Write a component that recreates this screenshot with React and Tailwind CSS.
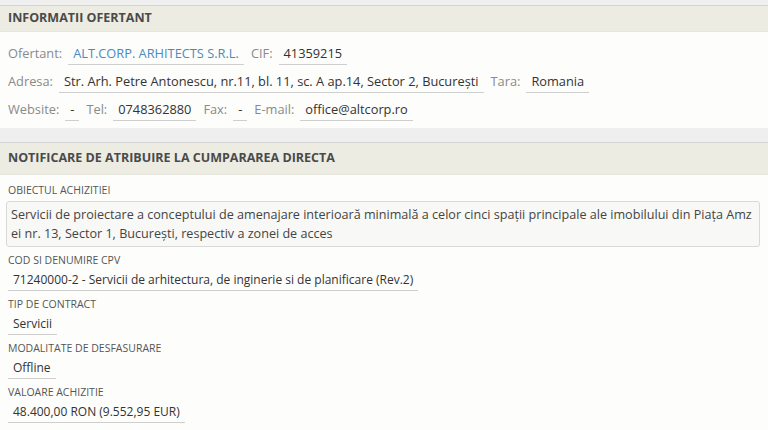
import React from "react";

function Field({ label, children, link }) {
  return (
    <span className="mr-[7px]">
      <span className="text-[#8a8a8a] mr-[6px]">{label}</span>
      <span
        className={
          "px-[5px] pb-[2px] border-b border-[#cfcfcf] " +
          (link ? "text-[#4b8bc0]" : "text-[#333333]")
        }
      >
        {children}
      </span>
    </span>
  );
}

function Header({ tall, children }) {
  return (
    <div>
      <div className={(tall ? "h-[15px]" : "h-[6px]") + " bg-[#efefef] border-b border-[#d4d4d4]"} />
      <div
        className={
          (tall ? "h-[32px]" : "h-[26px]") +
          " bg-[#ececE3] flex items-center px-2 text-[12.5px] font-bold text-[#4a4a4a] border-b border-[#e6e6dc]"
        }
      >
        {children}
      </div>
    </div>
  );
}

function Block({ label, children }) {
  return (
    <div className="mt-[6px]">
      <div className="text-[10.5px] text-[#555555] leading-[14px] uppercase">{label}</div>
      <div className="mt-[4px] flex">{children}</div>
    </div>
  );
}

function Value({ children }) {
  return (
    <span className="px-[5px] pb-[1px] border-b border-[#cfcfcf] text-[#333333] text-[12px] leading-[18px]">
      {children}
    </span>
  );
}

export default function App() {
  return (
    <div
      className="w-[768px] h-[430px] overflow-hidden bg-[#fdfdfb]"
      style={{ fontFamily: '"Open Sans", "Noto Sans", sans-serif' }}
    >
      <Header>INFORMATII OFERTANT</Header>
      <div className="px-2 pt-[12px] pb-[10px] text-[12.8px] leading-[18px] flex flex-col gap-[10px]">
        <div>
          <Field label="Ofertant:" link>ALT.CORP. ARHITECTS S.R.L.</Field>
          <Field label="CIF:">41359215</Field>
        </div>
        <div>
          <Field label="Adresa:">Str. Arh. Petre Antonescu, nr.11, bl. 11, sc. A ap.14, Sector 2, București</Field>
          <Field label="Tara:">Romania</Field>
        </div>
        <div>
          <Field label="Website:">-</Field>
          <Field label="Tel:">0748362880</Field>
          <Field label="Fax:">-</Field>
          <Field label="E-mail:">office@altcorp.ro</Field>
        </div>
      </div>
      <Header tall>NOTIFICARE DE ATRIBUIRE LA CUMPARAREA DIRECTA</Header>
      <div className="px-2 pt-[2px]">
        <Block label="Obiectul achizitiei">
          <div className="flex-1 ml-[-2px] bg-[#f8f8f6] border border-[#d9d9d9] rounded-[3px] px-[4px] py-[3px] text-[12.6px] leading-[19px] text-[#444444] break-all">
            Servicii de proiectare a conceptului de amenajare interioară minimală a celor cinci spații principale ale imobilului din Piața Amzei nr. 13, Sector 1, București, respectiv a zonei de acces
          </div>
        </Block>
        <Block label="Cod si denumire CPV">
          <Value>71240000-2 - Servicii de arhitectura, de inginerie si de planificare (Rev.2)</Value>
        </Block>
        <Block label="Tip de contract">
          <Value>Servicii</Value>
        </Block>
        <Block label="Modalitate de desfasurare">
          <Value>Offline</Value>
        </Block>
        <Block label="Valoare achizitie">
          <Value>48.400,00 RON (9.552,95 EUR)</Value>
        </Block>
      </div>
    </div>
  );
}
